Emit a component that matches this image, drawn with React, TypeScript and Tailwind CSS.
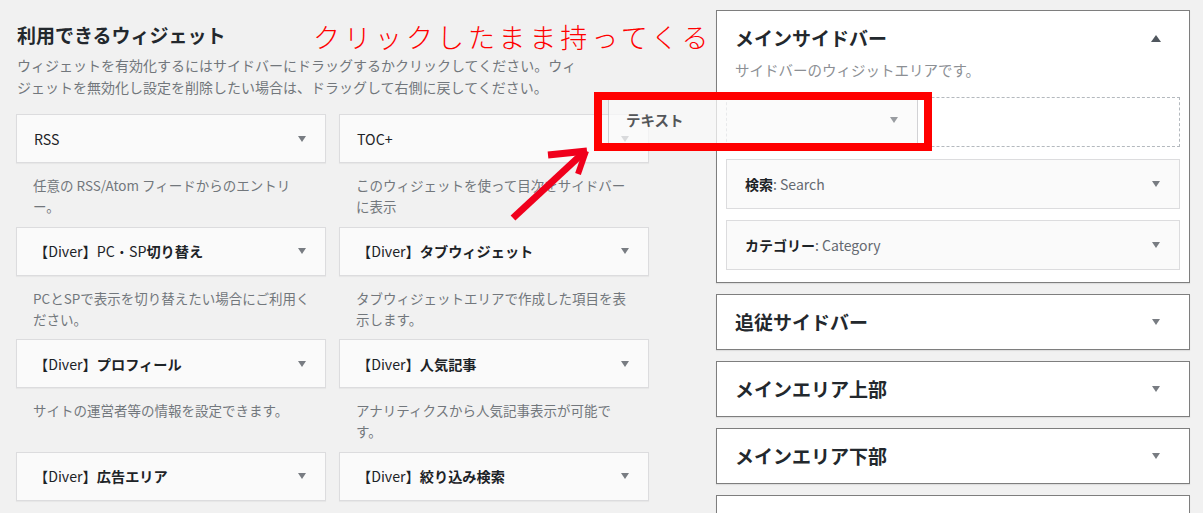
import React from "react";

const Down = ({ color = "#787c82" }: { color?: string }) => (
  <svg width="8" height="6" viewBox="0 0 8 6" className="shrink-0">
    <polygon points="0,0 8,0 4,6" fill={color} />
  </svg>
);

const Up = () => (
  <svg width="10" height="7" viewBox="0 0 10 7" className="shrink-0">
    <polygon points="0,7 10,7 5,0" fill="#50575e" />
  </svg>
);

type W = { pre?: string; bold?: string; desc: string[] };

const widgets: W[] = [
  { pre: "RSS", desc: ["任意の RSS/Atom フィードからのエントリ", "ー。"] },
  { pre: "TOC+", desc: ["このウィジェットを使って目次をサイドバー", "に表示"] },
  { pre: "【Diver】PC・SP", bold: "切り替え", desc: ["PCとSPで表示を切り替えたい場合にご利用く", "ださい。"] },
  { pre: "【Diver】", bold: "タブウィジェット", desc: ["タブウィジェットエリアで作成した項目を表", "示します。"] },
  { pre: "【Diver】", bold: "プロフィール", desc: ["サイトの運営者等の情報を設定できます。"] },
  { pre: "【Diver】", bold: "人気記事", desc: ["アナリティクスから人気記事表示が可能で", "す。"] },
  { pre: "【Diver】", bold: "広告エリア", desc: [] },
  { pre: "【Diver】", bold: "絞り込み検索", desc: [] },
];

const panels = ["追従サイドバー", "メインエリア上部", "メインエリア下部", ""];

export default function App() {
  return (
    <div className="relative w-[1203px] h-[513px] overflow-hidden bg-[#f1f1f1] font-['Noto_Sans_CJK_JP','Noto_Sans',sans-serif] text-[#23282d]">
      <div className="flex">
        {/* Left column */}
        <div className="w-[633px] ml-[16px] shrink-0">
          <h2 className="pt-[22px] pl-[1px] text-[19px] leading-[26px] font-bold text-[#23282d]">
            利用できるウィジェット
          </h2>
          <div className="mt-[7px] pl-[1px] text-[14px] leading-[21.5px] text-[#72777c] whitespace-nowrap">
            <div>ウィジェットを有効化するにはサイドバーにドラッグするかクリックしてください。ウィ</div>
            <div>ジェットを無効化し設定を削除したい場合は、ドラッグして右側に戻してください。</div>
          </div>
          <div className="mt-[16px] grid grid-cols-[310px_310px] gap-x-[13px]">
            {widgets.map((w, i) => (
              <div key={i} className="flex flex-col">
                <div className="h-[49px] border border-[#dcdcde] bg-[#fafafa] shadow-[0_1px_1px_rgba(0,0,0,0.04)] flex items-center justify-between pl-[17px] pr-[19px]">
                  <span className="text-[14.2px] leading-[20px] text-[#1d2327] whitespace-nowrap">
                    <span className="font-normal">{w.pre}</span>
                    {w.bold && <span className="font-bold">{w.bold}</span>}
                  </span>
                  <Down />
                </div>
                <div className="h-[63.5px] pt-[12px] px-[17px] text-[13.5px] leading-[21px] text-[#72777c] whitespace-nowrap">
                  {w.desc.map((d, j) => (
                    <div key={j}>{d}</div>
                  ))}
                </div>
              </div>
            ))}
          </div>
        </div>

        {/* Right column */}
        <div className="ml-[67px] w-[474px] shrink-0 pt-[10px] flex flex-col gap-[11px]">
          <div className="border border-[#7e7e7e] bg-white shadow-[0_1px_1px_rgba(0,0,0,0.08)] px-[9px] pt-[14px] pb-[12px]">
            <div className="flex items-center justify-between pl-[9px] pr-[19px] h-[26px]">
              <h3 className="text-[19px] leading-[26px] font-bold text-[#23282d]">メインサイドバー</h3>
              <Up />
            </div>
            <div className="mt-[9px] pl-[9px] text-[14.5px] leading-[20px] text-[#8c8f94]">
              サイドバーのウィジットエリアです。
            </div>
            <div className="mt-[17px] h-[50px] border border-dashed border-[#b4b9be]" />
            <div className="mt-[12px] h-[50px] border border-[#dcdcde] bg-[#fafafa] flex items-center justify-between pl-[18px] pr-[19px]">
              <span className="text-[14px] leading-[20px]">
                <span className="font-bold text-[#1d2327]">検索</span>
                <span className="text-[#646970]">: Search</span>
              </span>
              <Down />
            </div>
            <div className="mt-[11px] h-[50px] border border-[#dcdcde] bg-[#fafafa] flex items-center justify-between pl-[18px] pr-[19px]">
              <span className="text-[14px] leading-[20px]">
                <span className="font-bold text-[#1d2327]">カテゴリー</span>
                <span className="text-[#646970]">: Category</span>
              </span>
              <Down />
            </div>
          </div>
          {panels.map((p, i) => (
            <div
              key={i}
              className="h-[56px] shrink-0 border border-[#7e7e7e] bg-white shadow-[0_1px_1px_rgba(0,0,0,0.08)] flex items-center justify-between pl-[18px] pr-[29px]"
            >
              <h3 className="text-[19px] leading-[26px] font-bold text-[#23282d]">{p}</h3>
              {p && <Down />}
            </div>
          ))}
        </div>
      </div>

      {/* Annotation text */}
      <div className="absolute left-[313px] top-[17px] text-[27px] leading-[40px] tracking-[4px] text-[#ff0000] font-light whitespace-nowrap">
        クリックしたまま持ってくる
      </div>

      {/* Dragged widget helper */}
      <div className="absolute left-[608px] top-[95px] w-[310px] h-[50px] border border-[#c3c4c7] bg-[#fafafa] opacity-75 flex items-center justify-between pl-[17px] pr-[19px]">
        <span className="text-[14.5px] leading-[20px] font-bold text-[#1d2327]">テキスト</span>
        <Down />
      </div>

      {/* Red highlight box */}
      <div className="absolute left-[594px] top-[92px] w-[338px] h-[59px] border-[8px] border-[#ff0000]" />

      {/* Red arrow */}
      <svg className="absolute left-[500px] top-[140px]" width="100" height="90" viewBox="0 0 100 90">
        <path d="M13 78 L82 14" stroke="#f0001c" strokeWidth="7" strokeLinecap="butt" fill="none" />
        <path d="M48 15 L87 11" stroke="#f0001c" strokeWidth="7" strokeLinecap="butt" fill="none" />
        <path d="M86 11 L78 34" stroke="#f0001c" strokeWidth="6" strokeLinecap="butt" fill="none" />
      </svg>
    </div>
  );
}
